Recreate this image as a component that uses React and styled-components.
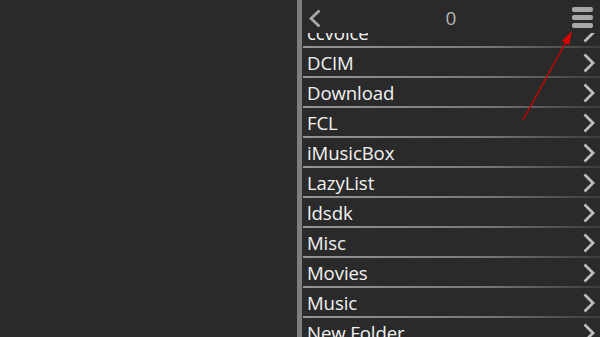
import React from "react";
import styled, { createGlobalStyle } from "styled-components";

const Global = createGlobalStyle`
  html, body { margin: 0; padding: 0; background: #2a2a2a; }
  body { width: 600px; height: 337px; overflow: hidden; font-family: "Open Sans", "Noto Sans", sans-serif; }
  #root { width: 600px; height: 337px; }
`;

const Screen = styled.div`
  position: relative;
  display: flex;
  width: 600px;
  height: 337px;
  background: #2a2a2a;
  overflow: hidden;
`;

const Blank = styled.div`
  width: 297px;
  flex: none;
`;

const Divider = styled.div`
  width: 5px;
  flex: none;
  background: #7f7f7f;
`;

const Panel = styled.div`
  flex: 1;
  display: flex;
  flex-direction: column;
  min-width: 0;
`;

const Header = styled.div`
  height: 33px;
  flex: none;
  display: grid;
  grid-template-columns: 1fr auto 1fr;
  align-items: center;
  padding: 0 7px 0 7px;
  color: #b3b3b3;
`;

const Count = styled.span`
  font-size: 19px;
  line-height: 1;
  color: #b5b5b5;
  margin-top: 4px;
`;

const BackBtn = styled.div`
  justify-self: start;
  display: flex;
  margin-top: 4px;
`;

const MenuBtn = styled.div`
  justify-self: end;
  display: flex;
  flex-direction: column;
  gap: 3px;
  margin-top: 2px;
`;

const Bar = styled.div`
  width: 21px;
  height: 5px;
  border-radius: 2px;
  background: #a8a8a8;
`;

const ListWrap = styled.div`
  flex: 1;
  overflow: hidden;
`;

const List = styled.div`
  margin-top: -15px;
  display: flex;
  flex-direction: column;
`;

const Row = styled.div`
  height: 30px;
  box-sizing: border-box;
  margin-left: 1px;
  display: flex;
  align-items: center;
  justify-content: space-between;
  padding: 1px 5px 0 4px;
  border-bottom: 2px solid #8a8a8a;
  border-image: linear-gradient(to right, #969696 0%, #7a7a7a 60%, #3c3c3c 100%) 1;
`;

const Name = styled.span`
  font-size: 18.6px;
  color: #f2f2f2;
  white-space: nowrap;
  letter-spacing: -0.1px;
`;

const Overlay = styled.svg`
  position: absolute;
  left: 0;
  top: 0;
  pointer-events: none;
`;

const Chevron = () => (
  <svg width="12" height="20" viewBox="0 0 12 20" style={{ display: "block" }}>
    <polyline points="1.5,1.5 10,10 1.5,18.5" fill="none" stroke="#bdbdbd" strokeWidth="2.8" />
  </svg>
);

const folders = ["ccvoice", "DCIM", "Download", "FCL", "iMusicBox", "LazyList", "ldsdk", "Misc", "Movies", "Music", "New Folder"];

export default function App() {
  return (
    <>
      <Global />
      <Screen>
        <Blank />
        <Divider />
        <Panel>
          <Header>
            <BackBtn>
              <svg width="12" height="19" viewBox="0 0 12 19">
                <polyline points="10.5,1.5 2,9.5 10.5,17.5" fill="none" stroke="#a6a6a6" strokeWidth="2.8" />
              </svg>
            </BackBtn>
            <Count>0</Count>
            <MenuBtn>
              <Bar />
              <Bar />
              <Bar />
            </MenuBtn>
          </Header>
          <ListWrap>
            <List>
              {folders.map((f) => (
                <Row key={f}>
                  <Name>{f}</Name>
                  <Chevron />
                </Row>
              ))}
            </List>
          </ListWrap>
        </Panel>
        <Overlay width="600" height="337" viewBox="0 0 600 337">
          <line x1="523" y1="120" x2="566" y2="42" stroke="#c80000" strokeWidth="1.5" />
          <polygon points="572,31 569,45 562,41" fill="#e00000" />
        </Overlay>
      </Screen>
    </>
  );
}
